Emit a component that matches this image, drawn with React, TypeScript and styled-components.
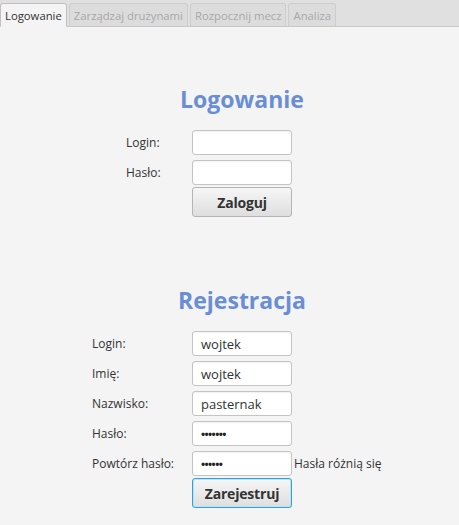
import styled, { createGlobalStyle } from "styled-components";

const GlobalStyle = createGlobalStyle`
  html, body {
    margin: 0;
    padding: 0;
    background: #f4f4f4;
    font-family: "Open Sans", "Noto Sans", sans-serif;
  }
`;

const tabs = ["Logowanie", "Zarządzaj drużynami", "Rozpocznij mecz", "Analiza"];

const App = () => {
  return (
    <>
      <GlobalStyle />
      <Window>
        <TabBar>
          {tabs.map((t, i) => (
            <Tab key={t} $active={i === 0}>{t}</Tab>
          ))}
        </TabBar>
        <Content>
          <Section $top={57}>
            <Title>Logowanie</Title>
            <Form $indent={34}>
              <Label>Login:</Label>
              <Field />
              <span />
              <Label>Hasło:</Label>
              <Field />
              <span />
              <span />
              <Button>Zaloguj</Button>
            </Form>
          </Section>
          <Section $top={68}>
            <Title>Rejestracja</Title>
            <Form $indent={0}>
              <Label>Login:</Label>
              <Field>wojtek</Field>
              <span />
              <Label>Imię:</Label>
              <Field>wojtek</Field>
              <span />
              <Label>Nazwisko:</Label>
              <Field>pasternak</Field>
              <span />
              <Label>Hasło:</Label>
              <Field><Dots>•••••••</Dots></Field>
              <span />
              <Label>Powtórz hasło:</Label>
              <Field><Dots>••••••</Dots></Field>
              <Hint>Hasła różnią się</Hint>
              <span />
              <Button $focused>Zarejestruj</Button>
            </Form>
          </Section>
        </Content>
      </Window>
    </>
  );
};

const Window = styled.div`
  width: 459px;
  height: 525px;
  background: #f4f4f4;
  overflow: hidden;
`;

const TabBar = styled.div`
  height: 26px;
  background: #e0e0e0;
  border-bottom: 1px solid #c8c8c8;
  display: flex;
  align-items: flex-end;
  gap: 2px;
`;

const Tab = styled.div<{ $active?: boolean }>`
  height: 22px;
  margin-bottom: -1px;
  padding: 0 4px;
  display: flex;
  align-items: center;
  font-size: 11.3px;
  border: 1px solid ${(p) => (p.$active ? "#c0c0c0" : "#cdcdcd")};
  border-bottom: ${(p) => (p.$active ? "1px solid #f4f4f4" : "1px solid #c8c8c8")};
  border-radius: 3px 3px 0 0;
  background: ${(p) => (p.$active ? "#f4f4f4" : "#dcdcdc")};
  color: ${(p) => (p.$active ? "#333" : "#a8a8a8")};
`;

const Content = styled.div`
  display: flex;
  flex-direction: column;
`;

const Section = styled.div<{ $top: number }>`
  margin-top: ${(p) => p.$top}px;
  margin-left: 92px;
  width: 300px;
  display: flex;
  flex-direction: column;
`;

const Title = styled.div`
  height: 30px;
  line-height: 30px;
  text-align: center;
  font-size: 23px;
  font-weight: 700;
  color: #6a8ed6;
  margin-bottom: 16px;
`;

const Form = styled.div<{ $indent: number }>`
  display: grid;
  grid-template-columns: ${(p) => 100 - p.$indent}px 100px auto;
  padding-left: ${(p) => p.$indent}px;
  row-gap: 5px;
  align-items: center;
`;

const Label = styled.div`
  font-size: 12px;
  color: #333;
`;

const Field = styled.div`
  box-sizing: border-box;
  height: 25px;
  width: 100px;
  background: #fff;
  border: 1px solid #c4c4c4;
  border-radius: 3px;
  box-shadow: inset 0 1px 2px rgba(0, 0, 0, 0.06);
  padding: 0 8px;
  display: flex;
  align-items: center;
  font-size: 13px;
  color: #333;
`;

const Dots = styled.span`
  font-size: 11px;
  font-weight: 700;
  letter-spacing: -0.6px;
  color: #222;
`;

const Hint = styled.div`
  font-size: 12px;
  color: #333;
  padding-left: 2px;
  white-space: nowrap;
`;

const Button = styled.div<{ $focused?: boolean }>`
  box-sizing: border-box;
  height: 30px;
  width: 100px;
  margin-top: -3px;
  display: flex;
  align-items: center;
  justify-content: center;
  font-size: 14px;
  font-weight: 700;
  letter-spacing: -0.2px;
  color: #333;
  border-radius: 3px;
  background: linear-gradient(#f6f6f6, #dedede);
  border: 1px solid ${(p) => (p.$focused ? "#2aa3de" : "#b4b4b4")};
  box-shadow: ${(p) => (p.$focused ? "inset 0 0 0 1px #bfe1f2" : "none")};
`;

export default App;
